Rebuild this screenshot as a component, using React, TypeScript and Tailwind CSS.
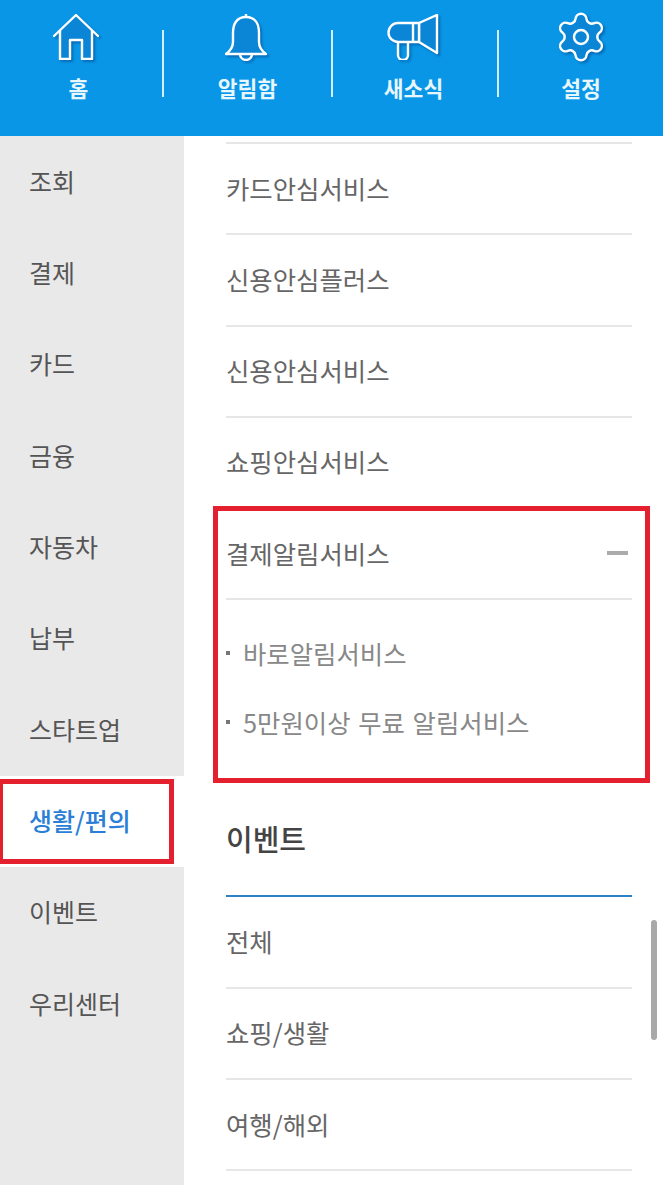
import { Settings } from "lucide-react"

const font = "font-['Noto_Sans_CJK_KR','Noto_Sans',sans-serif]"

const sideMenu = ["조회", "결제", "카드", "금융", "자동차", "납부", "스타트업", "생활/편의", "이벤트", "우리센터"]
const cardRows = ["카드안심서비스", "신용안심플러스", "신용안심서비스", "쇼핑안심서비스"]
const subRows = ["바로알림서비스", "5만원이상 무료 알림서비스"]
const eventRows = ["전체", "쇼핑/생활", "여행/해외"]

function HomeIcon() {
  return (
    <svg width="46" height="46" viewBox="0 0 46 46" fill="none" stroke="white" strokeWidth="2.4" strokeLinejoin="round" strokeLinecap="round">
      <path d="M7 18 L23 2 L39 18 V45 H30 V26 H16 V45 H7 Z" fill="#0b86d6" stroke="none" />
      <path d="M1 22 L23 1 L45 22" />
      <path d="M7 17 V45 H17 V26 H29 V45 H39 V17" />
    </svg>
  )
}

function BellIcon() {
  return (
    <svg width="44" height="48" viewBox="0 0 44 48" fill="none" stroke="white" strokeWidth="2.4" strokeLinejoin="round">
      <path d="M21 4 C11 4 8 12 8 20 V29 C8 34 5 38 1 41 H41 C37 38 34 34 34 29 V20 C34 12 31 4 21 4 Z" fill="#0b86d6" />
      <path d="M21 1 V4" />
      <path d="M15 41 A6 6 0 0 0 27 41" />
    </svg>
  )
}

function MegaphoneIcon() {
  return (
    <svg width="52" height="46" viewBox="0 0 52 46" fill="none" stroke="white" strokeWidth="2.4" strokeLinejoin="round">
      <path d="M32 9 L50 1 V39 L32 28 Z" fill="#0b86d6" />
      <path d="M11 9 H32 V28 H11 A9.5 9.5 0 0 1 11 9 Z" fill="#0b86d6" />
      <path d="M26 9 V28" />
      <path d="M11 28 V41 A5 5 0 0 0 21 41 V28" />
    </svg>
  )
}

const shortcuts = [
  { label: "홈", icon: <HomeIcon />, cell: "pr-[5px]", iconShift: "mr-[6px]" },
  { label: "알림함", icon: <BellIcon />, cell: "border-l-2", iconShift: "mr-[2px]" },
  { label: "새소식", icon: <MegaphoneIcon />, cell: "border-l-2 pr-[3px]", iconShift: "mr-[2px]" },
  { label: "설정", icon: <Settings size={56} strokeWidth={1.05} color="white" fill="#0b86d6" />, cell: "border-l-2", iconShift: "" },
]

function Row({ label }: { label: string }) {
  return (
    <div className="flex h-[91.3px] items-center border-b-2 border-[#e6e6e6] pb-[2px] text-[25.4px] text-[#666666]">
      {label}
    </div>
  )
}

export default function App() {
  return (
    <div className={`relative h-[1185px] w-[663px] overflow-hidden bg-white ${font}`}>
      <header className="grid h-[136px] grid-cols-[162px_169px_166px_166px] bg-[#0996e6]">
        {shortcuts.map((item) => (
          <div key={item.label} className="flex h-[97px] items-start">
            <div className={`mt-[30px] flex h-[67px] w-full flex-col items-center border-[#d5eefb] ${item.cell}`}>
              <div className={`-mt-[17px] flex h-[48px] shrink-0 items-center justify-center drop-shadow-[2px_2px_1px_rgba(0,60,130,0.45)] ${item.iconShift}`}>
                {item.icon}
              </div>
              <span className="mt-[12px] shrink-0 text-[21.5px] leading-[30px] font-bold whitespace-nowrap text-[#e8f6fe]">{item.label}</span>
            </div>
          </div>
        ))}
      </header>

      <div className="flex">
        <nav className="h-[1049px] w-[184px] shrink-0 bg-[#e9e9e9] pt-px">
          {sideMenu.map((label) => {
            const active = label === "생활/편의"
            return (
              <div
                key={label}
                className={`flex h-[91.3px] items-center pb-[2px] pl-[29px] text-[25px] ${
                  active ? "bg-white font-medium text-[#2b7fd6]" : "text-[#555555]"
                }`}
              >
                {label}
              </div>
            )
          })}
        </nav>

        <main className="ml-[42px] w-[406px]">
          <div className="mt-[6px] border-b-2 border-[#e6e6e6]" />
          {cardRows.map((label) => (
            <Row key={label} label={label} />
          ))}
          <div className="flex h-[91.3px] items-center justify-between border-b-2 border-[#e6e6e6] pb-[2px] text-[25.4px] text-[#666666]">
            결제알림서비스
            <span className="mr-[4px] h-[4px] w-[21px] bg-[#ababab]" />
          </div>
          <div className="pt-[20px]">
            {subRows.map((label) => (
              <div key={label} className="flex h-[69px] items-center pb-[3px] text-[25.4px] [word-spacing:2px] text-[#888888]">
                <span className="mr-[13px] h-[4px] w-[4px] bg-[#777777]" />
                {label}
              </div>
            ))}
          </div>
          <h2 className="border-b-2 border-[#2b82c4] pt-[60px] pb-[37px] text-[29px] leading-[40px] font-medium text-[#444444]">
            이벤트
          </h2>
          {eventRows.map((label) => (
            <Row key={label} label={label} />
          ))}
        </main>
      </div>

      {/* red annotation boxes and the scrollbar sit on top of the page */}
      <div className="absolute top-[506px] left-[213px] h-[277px] w-[437px] border-[5px] border-[#e4202e]" />
      <div className="absolute top-[779px] -left-[2px] h-[85px] w-[176px] border-[5px] border-[#e4202e]" />
      <div className="absolute top-[920px] left-[651px] h-[120px] w-[6px] rounded-full bg-[#a9a9a9]" />
    </div>
  )
}
